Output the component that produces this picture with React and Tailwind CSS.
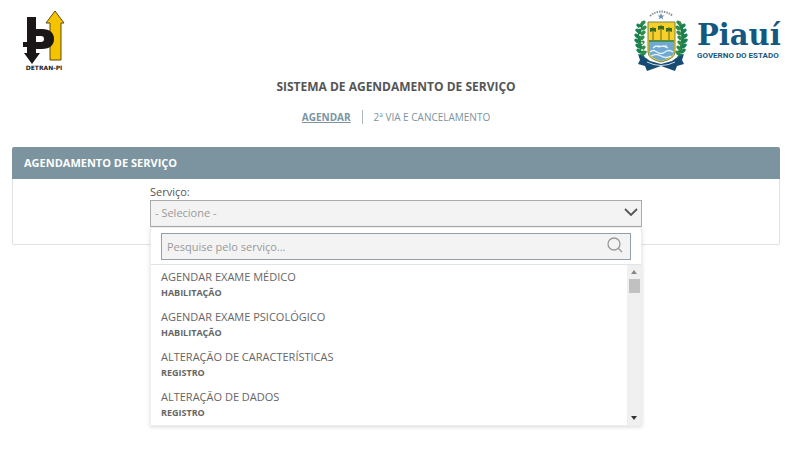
import React, { useRef, useState } from "react";

const services = [
  { name: "AGENDAR EXAME MÉDICO", area: "HABILITAÇÃO" },
  { name: "AGENDAR EXAME PSICOLÓGICO", area: "HABILITAÇÃO" },
  { name: "ALTERAÇÃO DE CARACTERÍSTICAS", area: "REGISTRO" },
  { name: "ALTERAÇÃO DE DADOS", area: "REGISTRO" },
];

function DetranLogo() {
  return (
    <div className="w-10 flex flex-col items-center">
      <svg viewBox="0 0 42 54" className="w-[42px] h-[54px] shrink-0" aria-hidden="true">
        {/* yellow arrow */}
        <path
          d="M32 1 L41 13 H38 V50 H27 V13 H23 Z"
          fill="#f6c300"
          stroke="#5a4a14"
          strokeWidth="1"
        />
        {/* black "þ" with arrow */}
        <path
          d="M4 7 H13 V19 H19 C27 19 31 23 31 29 C31 35 27 39 19 39 H13 V43 H17 L9 54 L1 43 H4 V37 H0 V32 H4 Z M13 26 V32 H18 C20 32 21 31 21 29 C21 27 20 26 18 26 Z"
          fill="#1b1718"
          fillRule="evenodd"
        />
      </svg>
      <span className="font-['DejaVu_Sans',sans-serif] font-bold text-[6px] leading-[7px] text-[#222] whitespace-nowrap">
        DETRAN-PI
      </span>
    </div>
  );
}

function Leaves({ mirrored }) {
  const leaves = [
    [10, 15], [6, 18], [11, 20], [5, 23], [10, 25], [4, 28],
    [9, 30], [4, 33], [9, 35], [5, 38], [10, 40], [6, 43], [11, 45], [9, 48],
  ];

  return (
    <g transform={mirrored ? "translate(56 0) scale(-1 1)" : undefined}>
      <path d="M10 14 C5 24 5 36 11 47" fill="none" stroke="#237a49" strokeWidth="3" />
      {leaves.map(([x, y], i) => (
        <ellipse
          key={i}
          cx={x}
          cy={y}
          rx="3"
          ry="1.8"
          fill={i % 2 ? "#168253" : "#2f8b45"}
          transform={`rotate(${i % 2 ? 35 : -35} ${x} ${y})`}
        />
      ))}
      {!mirrored &&
        [20, 27, 35, 42].map((y) => (
          <circle key={y} cx={y < 30 ? 7 : 9} cy={y} r="1" fill="#e9f2df" />
        ))}
    </g>
  );
}

function Palm({ x, y, bottom }) {
  return (
    <g>
      <path d={`M${x} ${y} V${bottom}`} stroke="#6a6b20" strokeWidth="1" />
      <path
        d={`M${x} ${y} L${x - 3} ${y + 1} L${x - 3} ${y - 1} L${x - 3} ${y - 3} L${x - 1} ${y - 3} L${x} ${y - 4} L${x + 1} ${y - 3} L${x + 3} ${y - 3} L${x + 3} ${y - 1} L${x + 3} ${y + 1} Z`}
        fill="#3d6b22"
      />
    </g>
  );
}

function CoatOfArms() {
  return (
    <svg viewBox="0 0 56 64" className="w-14 h-16" aria-hidden="true">
      <path
        d="M17 8 Q28 -1 40 8"
        fill="none"
        stroke="#8b9096"
        strokeWidth="2"
        strokeDasharray="1.5 1"
      />
      <path
        d="M28 5 L29 7.5 L31.5 7.5 L29.5 9 L30.2 11.5 L28 10 L25.8 11.5 L26.5 9 L24.5 7.5 L27 7.5 Z"
        fill="#6c91b5"
      />
      <Leaves />
      <Leaves mirrored />
      {/* shield */}
      <path d="M15 14 H42 V44 Q42 51 28 54 Q15 51 15 44 Z" fill="#f6cf28" stroke="#77854b" strokeWidth="1" />
      <path d="M16 32 H41 V34 H16 Z" fill="#4f8f4c" />
      <path d="M16 34 H41 V44 Q40 50 28 53 Q17 50 16 44 Z" fill="#6fa9d2" />
      <path d="M17 44 Q20 41 24 44 T32 44 T40 44 M18 48 Q23 45 28 48 T38 48" fill="none" stroke="#e4f1f8" strokeWidth="1.3" />
      <path d="M20 40 Q23 37 26 39 Q30 37 35 40 M22 38 H27 M30 38 H34" fill="none" stroke="#eef6fa" strokeWidth="1.2" />
      <Palm x={20} y={23} bottom={32} />
      <Palm x={28} y={21} bottom={32} />
      <Palm x={36} y={23} bottom={32} />
      {/* ribbon */}
      <path
        d="M5 46 L13 50 L17 53 L28 56 L39 53 L43 50 L51 46 L49 52 L51 56 L44 58 L42 63 L28 58 L14 63 L12 58 L5 56 L7 52 Z"
        fill="#174b72"
      />
      <path d="M14 54 Q28 61 42 54" fill="none" stroke="#c9dcea" strokeWidth="1" />
    </svg>
  );
}

function PiauiLogo() {
  return (
    <div className="flex items-start gap-2 text-[#15587f]">
      <CoatOfArms />
      <div className="w-[83px] pt-[11px] whitespace-nowrap">
        <div className="font-['DejaVu_Serif',serif] font-bold text-[29px] leading-[33px]">
          Piauí
        </div>
        <div className="font-['Roboto',sans-serif] font-bold text-[8px] leading-[8px]">
          GOVERNO DO ESTADO
        </div>
      </div>
    </div>
  );
}

function ServiceSelect() {
  const [open, setOpen] = useState(true);
  const [search, setSearch] = useState("");
  const [selected, setSelected] = useState("");
  const listRef = useRef(null);

  const filtered = services.filter((s) =>
    s.name.toLowerCase().includes(search.toLowerCase())
  );

  const handleToggle = (e) => {
    e.preventDefault();
    setOpen(!open);
  };

  const handlePick = (name) => {
    setSelected(name);
    setOpen(false);
  };

  return (
    <div className="w-full max-w-[492px]">
      <label htmlFor="servico" className="block text-[11px] leading-4 text-[#555]">
        Serviço:
      </label>

      <div className="relative">
        <select
          id="servico"
          value={selected}
          onMouseDown={handleToggle}
          onChange={(e) => setSelected(e.target.value)}
          className="block w-full h-[27px] pl-1 pr-8 appearance-none bg-[#f3f3f3] border border-[#aaa] text-[11px] text-[#999] outline-none"
        >
          <option value="">- Selecione -</option>
          {services.map((s) => (
            <option key={s.name}>{s.name}</option>
          ))}
        </select>
        <svg
          viewBox="0 0 14 8"
          className="absolute right-1 top-2 w-[14px] h-2 pointer-events-none"
          fill="none"
          stroke="#555"
          strokeWidth="1.8"
          aria-hidden="true"
        >
          <path d="M1 1 L7 7 L13 1" />
        </svg>

        {open && (
          <div className="absolute inset-x-0 top-full bg-white border border-[#eee] shadow-[0_1px_4px_rgba(0,0,0,0.15)]">
            {/* Search */}
            <div className="relative px-[10px] pt-[5px] pb-1 border-b border-[#dde3e6]">
              <input
                type="text"
                aria-label="Pesquise pelo serviço"
                placeholder="Pesquise pelo serviço..."
                value={search}
                onChange={(e) => setSearch(e.target.value)}
                className="block w-full h-[27px] pl-[5px] pr-8 bg-[#f3f3f3] border border-[#8fa0ac] text-[11px] text-[#555] placeholder:text-[#999] outline-none"
              />
              <svg
                viewBox="0 0 16 16"
                className="absolute right-[18px] top-[9px] w-4 h-4 pointer-events-none"
                fill="none"
                stroke="#999"
                strokeWidth="1.3"
                aria-hidden="true"
              >
                <circle cx="7" cy="7" r="6" />
                <path d="M11 11 L15 15" />
              </svg>
            </div>

            {/* Options */}
            <div className="flex h-40">
              <ul ref={listRef} className="flex-1 overflow-hidden">
                {filtered.map((s) => (
                  <li key={s.name}>
                    <button
                      type="button"
                      onClick={() => handlePick(s.name)}
                      className="block w-full h-10 px-[10px] pb-[2px] text-left text-[#666]"
                    >
                      <span className="block text-[11px] leading-[18px]">{s.name}</span>
                      <span className="block text-[9px] leading-[14px] font-bold">{s.area}</span>
                    </button>
                  </li>
                ))}
              </ul>
              <div className="flex flex-col items-center w-[14px] bg-[#f0f0f0]">
                <button
                  type="button"
                  aria-label="Rolar para cima"
                  onClick={() => listRef.current.scrollBy(0, -40)}
                  className="flex items-center justify-center w-full h-[14px]"
                >
                  <svg viewBox="0 0 6 4" className="w-[6px] h-1" aria-hidden="true">
                    <path d="M0 4 L3 0 L6 4 Z" fill="#888" />
                  </svg>
                </button>
                <div className="w-[11px] h-[14px] bg-[#c1c1c1]" />
                <div className="flex-1" />
                <button
                  type="button"
                  aria-label="Rolar para baixo"
                  onClick={() => listRef.current.scrollBy(0, 40)}
                  className="flex items-center justify-center w-full h-[14px]"
                >
                  <svg viewBox="0 0 6 4" className="w-[6px] h-1" aria-hidden="true">
                    <path d="M0 0 H6 L3 4 Z" fill="#333" />
                  </svg>
                </button>
              </div>
            </div>
          </div>
        )}
      </div>
    </div>
  );
}

export default function App() {
  return (
    <div className="min-h-screen bg-white pl-3 pr-5 font-['Open_Sans','Noto_Sans',sans-serif] text-[#555]">
      <header className="flex items-start justify-between pt-2 pl-3">
        <div className="pt-[2px]">
          <DetranLogo />
        </div>
        <PiauiLogo />
      </header>

      <h1 className="mt-[5px] text-center text-xs leading-5 font-bold text-[#555]">
        SISTEMA DE AGENDAMENTO DE SERVIÇO
      </h1>

      <nav className="mt-3 flex items-center justify-center gap-[11px] text-[10px] leading-4 text-[#7b94a0]">
        <a href="#agendar" className="font-bold underline">
          AGENDAR
        </a>
        <span className="w-px h-[14px] bg-[#aab6bd]" />
        <a href="#cancelamento">2ª VIA E CANCELAMENTO</a>
      </nav>

      <section className="mt-[22px]">
        <h2 className="h-8 pl-3 rounded-t-xs bg-[#7b94a0] text-[11px] leading-8 font-bold text-white">
          AGENDAMENTO DE SERVIÇO
        </h2>
        <div className="flex justify-center pt-[5px] pb-[17px] border border-t-0 border-[#dfe3e5] rounded-b-xs">
          <ServiceSelect />
        </div>
      </section>
    </div>
  );
}
